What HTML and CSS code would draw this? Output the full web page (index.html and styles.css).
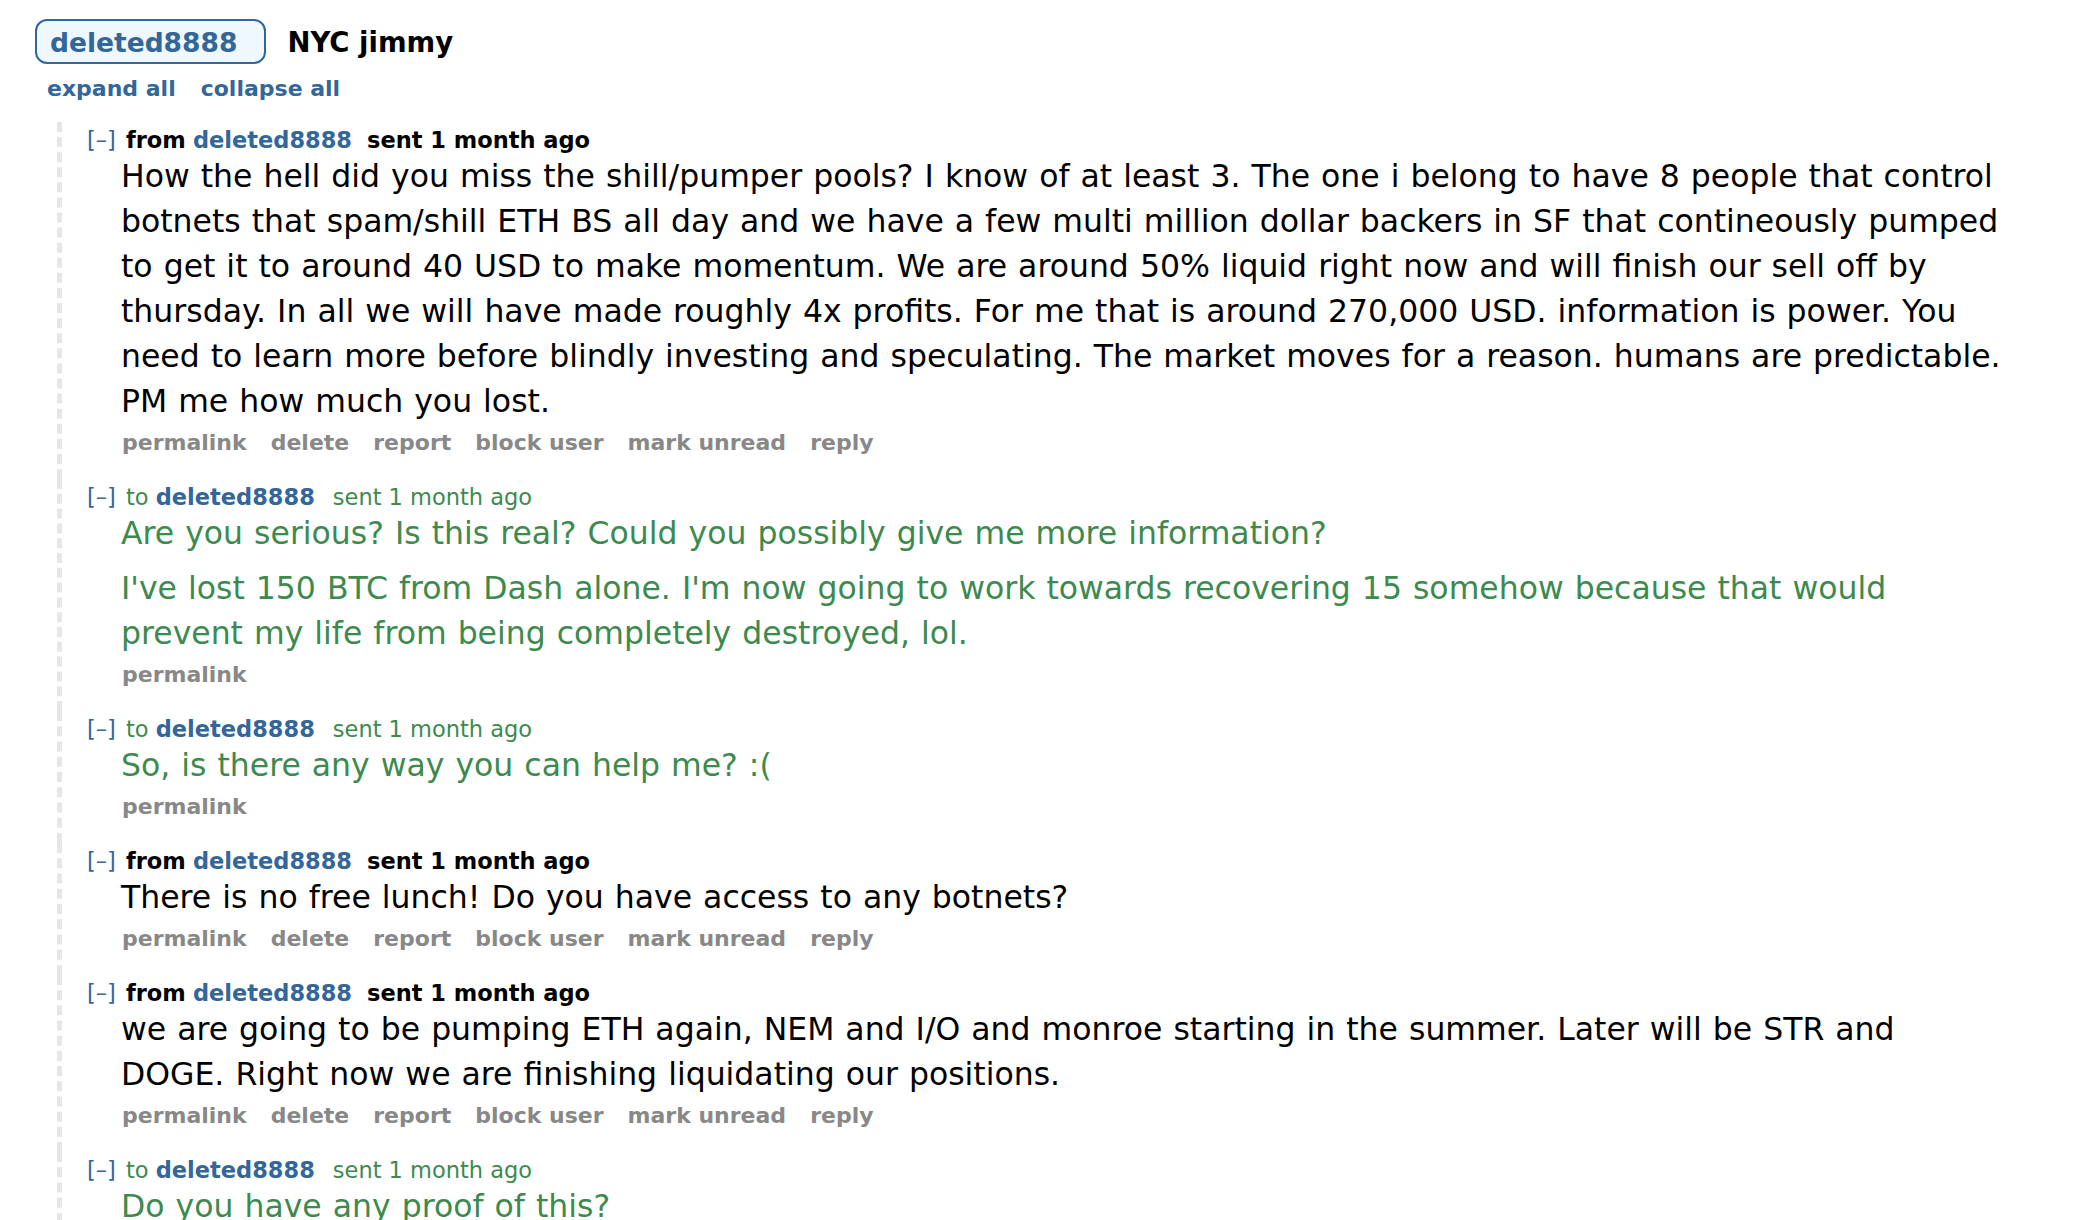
FILE: index.html
```html
<!DOCTYPE html>
<html lang="en">
<head>
<meta charset="utf-8">
<title>NYC jimmy</title>
<link rel="stylesheet" href="styles.css">
</head>
<body>
<div class="page">
  <div class="title-row">
    <span class="pill">deleted8888</span>
    <span class="subject">NYC jimmy</span>
  </div>
  <div class="toggles">
    <a class="toggle">expand all</a>
    <a class="toggle">collapse all</a>
  </div>
  <div class="thread">
    <div class="msg received">
      <div class="tagline"><a class="expand">[–]</a> <span class="dir">from</span> <a class="author">deleted8888</a><span class="time">sent 1 month ago</span></div>
      <div class="md"><p>How the hell did you miss the shill/pumper pools? I know of at least 3. The one i belong to have 8 people that control botnets that spam/shill ETH BS all day and we have a few multi million dollar backers in SF that contineously pumped to get it to around 40 USD to make momentum. We are around 50% liquid right now and will finish our sell off by thursday. In all we will have made roughly 4x profits. For me that is around 270,000 USD. information is power. You need to learn more before blindly investing and speculating. The market moves for a reason. humans are predictable. PM me how much you lost.</p></div>
      <ul class="buttons"><li>permalink</li><li>delete</li><li>report</li><li>block user</li><li>mark unread</li><li>reply</li></ul>
    </div>
    <div class="msg sent">
      <div class="tagline"><a class="expand">[–]</a> <span class="dir">to</span> <a class="author">deleted8888</a><span class="time">sent 1 month ago</span></div>
      <div class="md"><p>Are you serious? Is this real? Could you possibly give me more information?</p><p>I've lost 150 BTC from Dash alone. I'm now going to work towards recovering 15 somehow because that would prevent my life from being completely destroyed, lol.</p></div>
      <ul class="buttons"><li>permalink</li></ul>
    </div>
    <div class="msg sent">
      <div class="tagline"><a class="expand">[–]</a> <span class="dir">to</span> <a class="author">deleted8888</a><span class="time">sent 1 month ago</span></div>
      <div class="md"><p>So, is there any way you can help me? :(</p></div>
      <ul class="buttons"><li>permalink</li></ul>
    </div>
    <div class="msg received">
      <div class="tagline"><a class="expand">[–]</a> <span class="dir">from</span> <a class="author">deleted8888</a><span class="time">sent 1 month ago</span></div>
      <div class="md"><p>There is no free lunch! Do you have access to any botnets?</p></div>
      <ul class="buttons"><li>permalink</li><li>delete</li><li>report</li><li>block user</li><li>mark unread</li><li>reply</li></ul>
    </div>
    <div class="msg received">
      <div class="tagline"><a class="expand">[–]</a> <span class="dir">from</span> <a class="author">deleted8888</a><span class="time">sent 1 month ago</span></div>
      <div class="md"><p>we are going to be pumping ETH again, NEM and I/O and monroe starting in the summer. Later will be STR and DOGE. Right now we are finishing liquidating our positions.</p></div>
      <ul class="buttons"><li>permalink</li><li>delete</li><li>report</li><li>block user</li><li>mark unread</li><li>reply</li></ul>
    </div>
    <div class="msg sent">
      <div class="tagline"><a class="expand">[–]</a> <span class="dir">to</span> <a class="author">deleted8888</a><span class="time">sent 1 month ago</span></div>
      <div class="md"><p>Do you have any proof of this?</p></div>
      <ul class="buttons"><li>permalink</li></ul>
    </div>
  </div>
</div>
</body>
</html>
```

FILE: styles.css
```css
html, body {
  margin: 0;
  padding: 0;
  background: #ffffff;
}

body {
  font-family: "DejaVu Sans", Verdana, sans-serif;
  color: #111111;
  overflow: hidden;
}

.page {
  padding: 19px 0 0 35px;
}

.title-row {
  display: flex;
  align-items: baseline;
  gap: 21px;
  height: 45px;
}

.pill {
  display: inline-block;
  box-sizing: border-box;
  height: 45px;
  border: 2px solid #336699;
  border-radius: 12px;
  background: #eff7ff;
  color: #336699;
  font-size: 26.5px;
  font-weight: bold;
  line-height: 38px;
  padding: 3px 27px 0 13px;
}

.subject {
  font-size: 27.5px;
  font-weight: bold;
  line-height: 38px;
  color: #000;
}

.toggles {
  margin-top: 11px;
  padding-left: 12px;
  display: flex;
  gap: 25px;
  font-size: 22px;
  line-height: 28px;
  font-weight: bold;
}

.toggle {
  color: #336699;
}

.thread {
  margin: 19px 0 0 22px;
}

.msg {
  border-left: 5px dashed #e6e6e6;
  padding: 4px 0 22px 25px;
}

.tagline {
  font-size: 22.5px;
  line-height: 28px;
  white-space: nowrap;
}

.expand {
  color: #336699;
  font-weight: normal;
}

.dir {
  margin-left: 3px;
}

.author {
  color: #336699;
  font-weight: bold;
}

.time {
  margin-left: 18px;
}

.received .dir,
.received .time {
  font-weight: bold;
  color: #000;
}

.received .time {
  margin-left: 15px;
}

.sent .dir,
.sent .time {
  color: #3d8a4e;
}

.md {
  margin-left: 34px;
  font-size: 31.5px;
  line-height: 45px;
  word-spacing: 1px;
  max-width: 1882px;
}

.md p {
  margin: 0;
}

.md p + p {
  margin-top: 10px;
}

.received .md {
  color: #000;
}

.sent .md {
  color: #3d8a4e;
}

.buttons {
  list-style: none;
  margin: 5px 0 0 35px;
  padding: 0;
  display: flex;
  gap: 24px;
  font-size: 22px;
  line-height: 28px;
  font-weight: bold;
  color: #888888;
}
```
